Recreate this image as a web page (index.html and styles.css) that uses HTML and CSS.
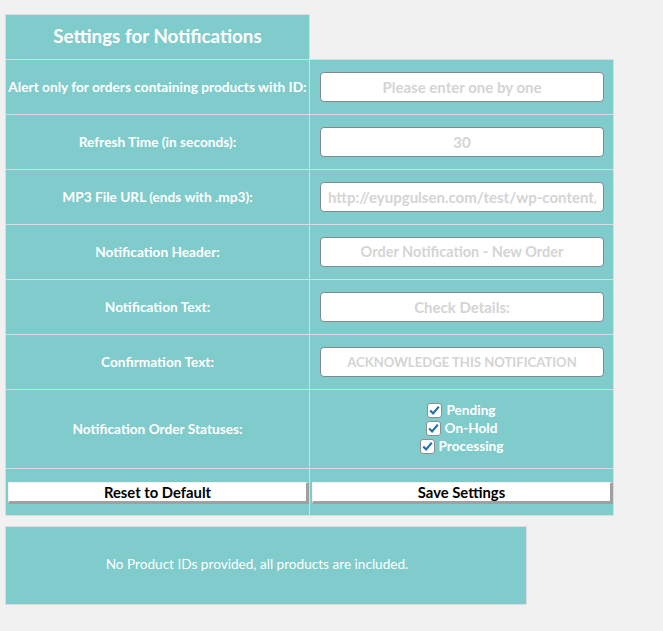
FILE: index.html
```html
<!DOCTYPE html>
<html>
<head>
<meta charset="utf-8">
<link rel="stylesheet" href="styles.css">
</head>
<body>
<div class="settings">
  <div class="cell head">Settings for Notifications</div>
  <div class="blank"></div>

  <div class="cell label">Alert only for orders containing products with ID:</div>
  <div class="cell field first"><input class="txt" type="text" placeholder="Please enter one by one"></div>

  <div class="cell label">Refresh Time (in seconds):</div>
  <div class="cell field"><input class="txt" type="text" placeholder="30"></div>

  <div class="cell label">MP3 File URL (ends with .mp3):</div>
  <div class="cell field"><input class="txt left" type="text" placeholder="http://eyupgulsen.com/test/wp-content/plugins/order-notification/alert.mp3"></div>

  <div class="cell label">Notification Header:</div>
  <div class="cell field"><input class="txt mid" type="text" placeholder="Order Notification - New Order"></div>

  <div class="cell label">Notification Text:</div>
  <div class="cell field"><input class="txt" type="text" placeholder="Check Details:"></div>

  <div class="cell label">Confirmation Text:</div>
  <div class="cell field"><input class="txt caps" type="text" placeholder="ACKNOWLEDGE THIS NOTIFICATION"></div>

  <div class="cell label tall">Notification Order Statuses:</div>
  <div class="cell field tall">
    <div class="checks">
      <label class="check"><svg class="box" width="15" height="15" viewBox="0 0 15 15"><rect x="0.5" y="0.5" width="14" height="14" rx="2.5" fill="#fff" stroke="#8c8f94"/><path d="M3.2 7.4 L6.1 10.4 L11.8 3.6" fill="none" stroke="#2271b1" stroke-width="2.2"/></svg>Pending</label>
      <label class="check"><svg class="box" width="15" height="15" viewBox="0 0 15 15"><rect x="0.5" y="0.5" width="14" height="14" rx="2.5" fill="#fff" stroke="#8c8f94"/><path d="M3.2 7.4 L6.1 10.4 L11.8 3.6" fill="none" stroke="#2271b1" stroke-width="2.2"/></svg>On-Hold</label>
      <label class="check"><svg class="box" width="15" height="15" viewBox="0 0 15 15"><rect x="0.5" y="0.5" width="14" height="14" rx="2.5" fill="#fff" stroke="#8c8f94"/><path d="M3.2 7.4 L6.1 10.4 L11.8 3.6" fill="none" stroke="#2271b1" stroke-width="2.2"/></svg>Processing</label>
    </div>
  </div>

  <div class="cell btncell"><button class="btn">Reset to Default</button></div>
  <div class="cell btncell"><button class="btn">Save Settings</button></div>
</div>

<div class="notice">No Product IDs provided, all products are included.</div>
</body>
</html>
```

FILE: styles.css
```css
html, body {
  margin: 0;
  padding: 0;
  background: #f1f1f1;
}
body {
  padding: 14px 0 0 5px;
  font-family: "Lato", "Liberation Sans", sans-serif;
}
.settings {
  display: grid;
  grid-template-columns: 305px 304px;
  width: 609px;
}
.cell {
  background: #80cbcb;
  border-right: 1px solid #dcdcdc;
  border-bottom: 1px solid #dcdcdc;
  display: flex;
  align-items: center;
  justify-content: center;
  box-sizing: border-box;
  height: 55px;
}
.cell:nth-child(odd) {
  border-left: 1px solid #dcdcdc;
}
.head {
  border-top: 1px solid #dcdcdc;
  height: 46px;
  padding-bottom: 4px;
  color: #fff;
  font-weight: 700;
  font-size: 18.8px;
}
.blank {
  height: 46px;
}
.first {
  border-top: 1px solid #dcdcdc;
  margin-top: -1px;
  height: 56px;
}
.label {
  color: #fff;
  font-weight: 700;
  font-size: 13.7px;
  text-align: center;
  white-space: nowrap;
  padding-bottom: 2px;
}
.txt {
  width: 284px;
  height: 30px;
  box-sizing: border-box;
  border: 1px solid #7e8993;
  border-radius: 4px;
  background: #fff;
  font-family: "Lato", "Liberation Sans", sans-serif;
  font-weight: 700;
  font-size: 15px;
  text-align: center;
  padding: 0 7px 1px;
  margin-left: 1px;
}
.txt::placeholder {
  color: #d4d4d4;
  opacity: 1;
}
.txt.left {
  text-align: left;
}
.txt.mid {
  font-size: 14.5px;
}
.txt.caps {
  font-size: 13.1px;
}
.tall {
  height: 79px;
}
.checks {
  display: flex;
  flex-direction: column;
  align-items: center;
  gap: 3px;
  margin-top: -2px;
}
.check {
  display: flex;
  align-items: center;
  gap: 4px;
  color: #fff;
  font-weight: 700;
  font-size: 13.6px;
  line-height: 15px;
}
.box {
  display: block;
}
.btncell {
  height: 47px;
  justify-content: flex-start;
  padding-left: 2px;
}
.btn {
  width: 301px;
  height: 22px;
  box-sizing: border-box;
  background: #fff;
  border-style: solid;
  border-width: 1px 3px 3px 1px;
  border-color: #f2f2f2 #a0a0a0 #a0a0a0 #f2f2f2;
  font-family: "Lato", "Liberation Sans", sans-serif;
  font-weight: 700;
  font-size: 14.8px;
  line-height: 16px;
  color: #000;
  padding: 0;
  margin-top: 1px;
}
.notice {
  margin-top: 10px;
  width: 522px;
  height: 79px;
  box-sizing: border-box;
  background: #80cbcb;
  border: 1px solid #dcdcdc;
  color: #fff;
  font-size: 13.6px;
  padding: 0 18px 4px 0;
  display: flex;
  align-items: center;
  justify-content: center;
}
```
